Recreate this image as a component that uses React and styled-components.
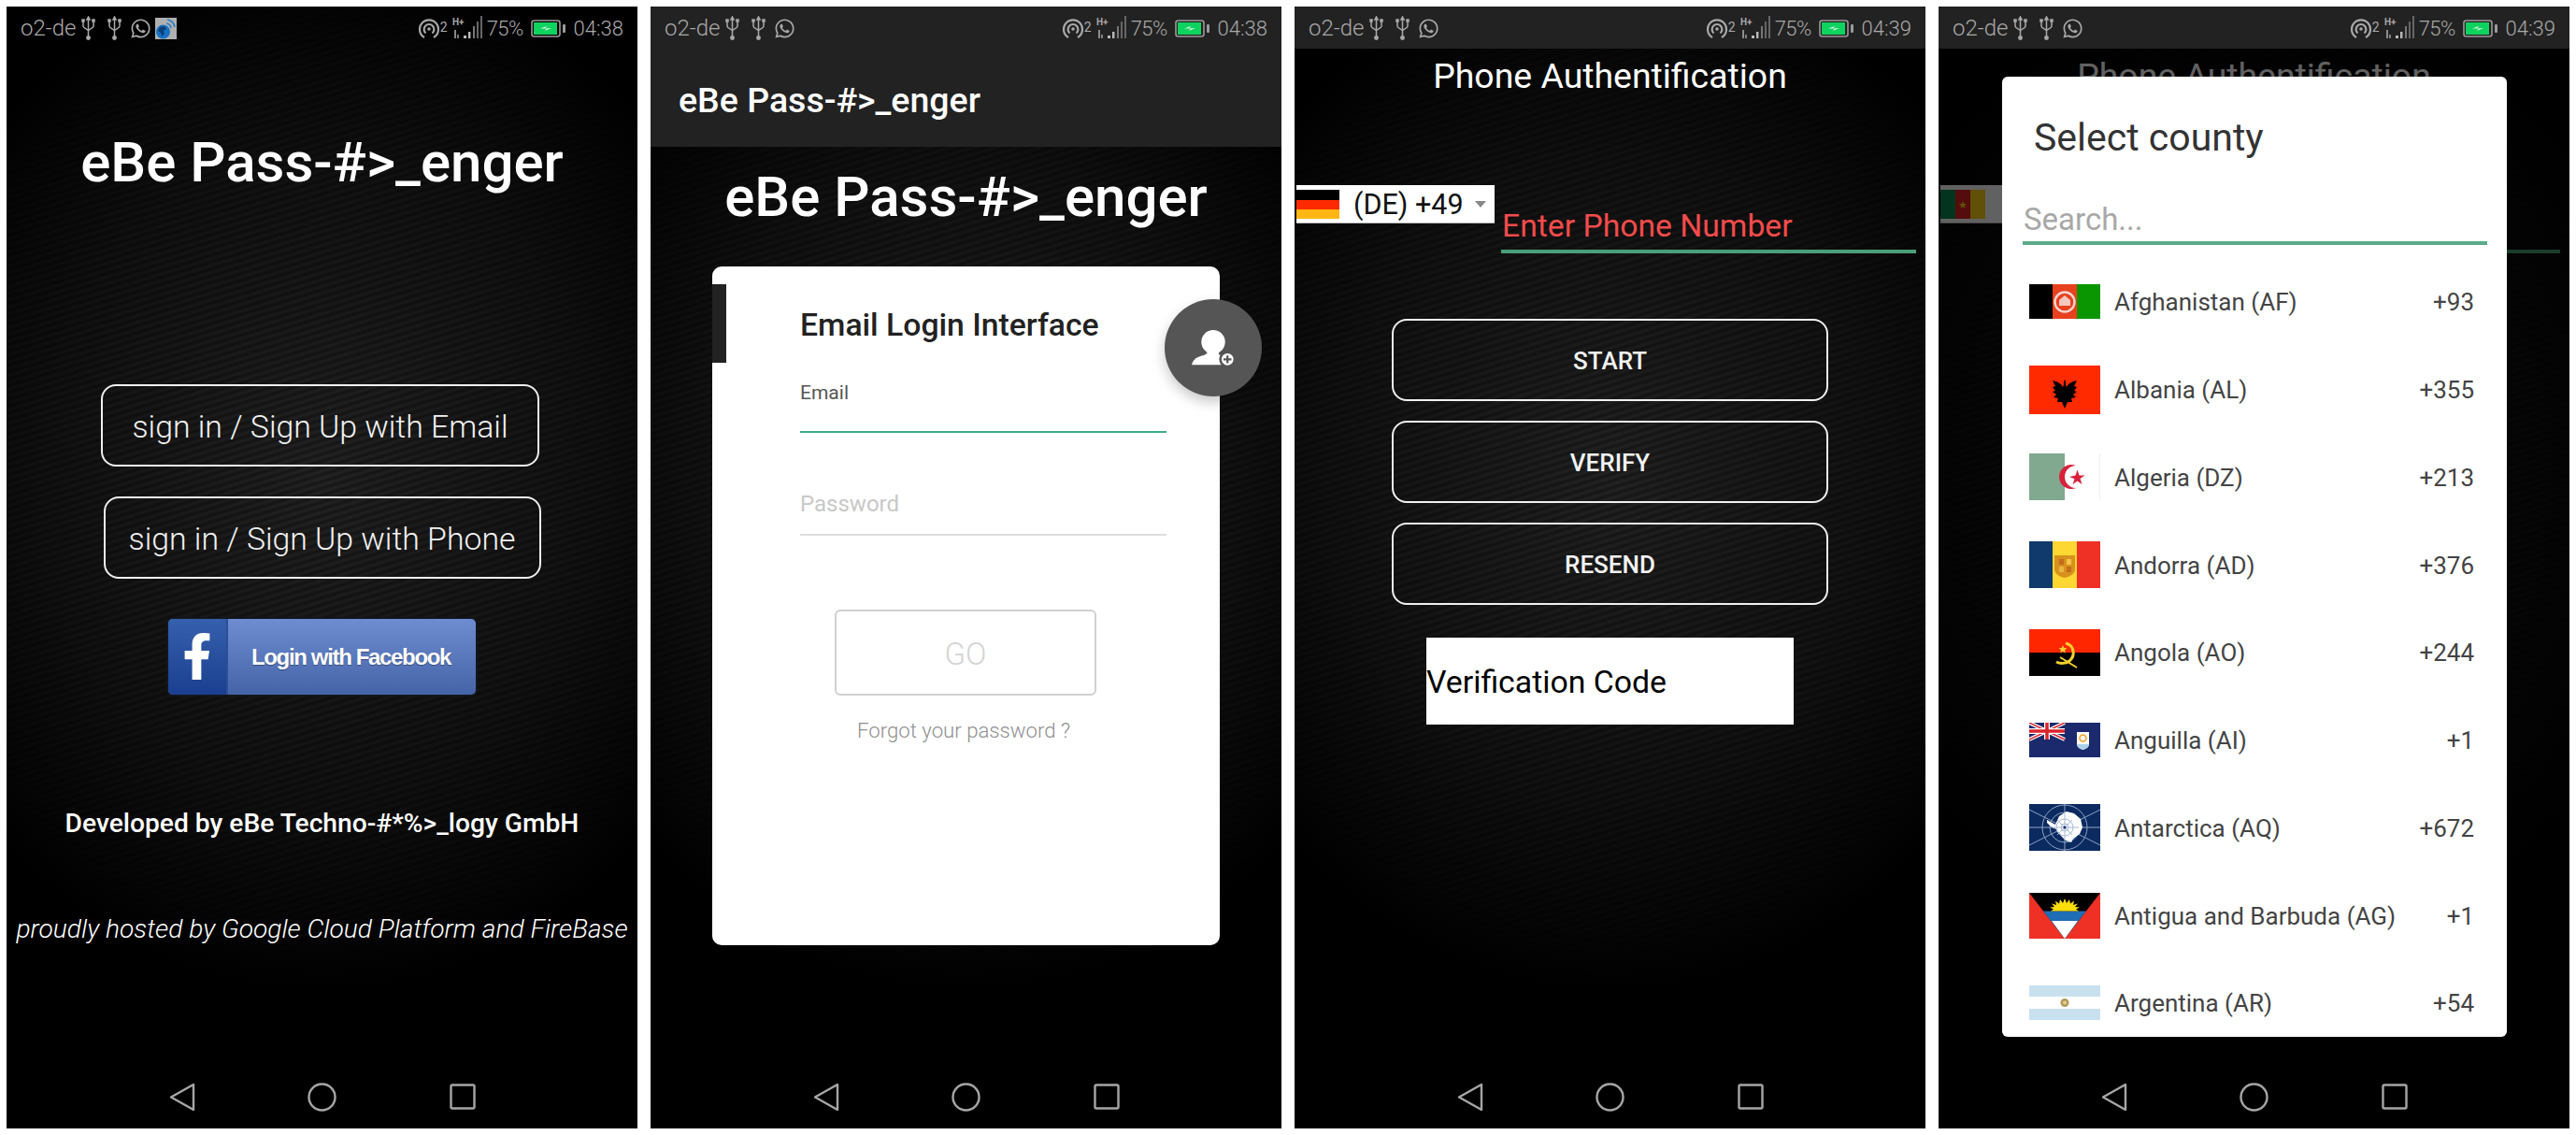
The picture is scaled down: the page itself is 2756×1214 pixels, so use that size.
import React from "react";
import styled, { createGlobalStyle } from "styled-components";
import { FaWhatsapp, FaFacebookF } from "react-icons/fa";

const Global = createGlobalStyle`
  html, body { margin: 0; padding: 0; background: #fff; }
  * { box-sizing: border-box; }
  body { font-family: Roboto, "Liberation Sans", sans-serif; }
`;

const Page = styled.div`
  width: 2756px;
  height: 1214px;
  padding: 7px;
  display: grid;
  grid-template-columns: repeat(4, 675px);
  gap: 14px;
  overflow: hidden;
`;

const Phone = styled.section`
  position: relative;
  height: 1200px;
  display: flex;
  flex-direction: column;
  overflow: hidden;
  color: #fff;
  background-color: #000;
  background-image:
    radial-gradient(ellipse 72% 46% at 50% 42%, rgba(0,0,0,0) 0%, rgba(0,0,0,.5) 60%, rgba(0,0,0,1) 100%),
    repeating-linear-gradient(163deg, #242424 0, #161616 3.5px, #242424 7px);
`;

const Main = styled.main`
  flex: 1;
  display: flex;
  flex-direction: column;
  min-height: 0;
`;

const Status = styled.div`
  height: 45px;
  flex: none;
  padding: 1px 15px 0;
  display: flex;
  align-items: center;
  justify-content: space-between;
  color: #a9a9a9;
  font-size: 23px;
  font-weight: 300;
  background: ${(p) => (p.$tinted ? "#222" : "transparent")};
`;

const StatusGroup = styled.div`
  display: flex;
  align-items: center;
`;

const Carrier = styled.span`
  width: 65px;
  font-size: 24px;
`;

const Percent = styled.span`
  margin: 0 8px 0 3px;
  font-size: 22px;
  letter-spacing: -0.6px;
`;

const Clock = styled.span`
  margin-left: 9px;
  font-size: 22px;
`;

const WhatsappIcon = styled(FaWhatsapp)`
  width: 23px;
  height: 23px;
  margin-left: -4px;
`;

const Sup = styled.sup`
  font-size: 14px;
  font-weight: 400;
  line-height: 1;
  margin: 0 4px 12px 1px;
  align-self: flex-start;
  padding-top: 9px;
`;

const Nav = styled.nav`
  height: 68px;
  flex: none;
  display: flex;
  align-items: center;
  padding-left: 174px;
  position: relative;
  z-index: 4;
`;

const NavSlot = styled.span`
  width: ${(p) => p.$w}px;
  display: flex;
`;

const Usb = () => (
  <svg width="15" height="26" viewBox="0 0 15 26" fill="none" stroke="#a9a9a9" strokeWidth="1.5" style={{ marginRight: 13 }}>
    <path d="M7.5 3v20M2 6v5c0 2.5 5.5 3 5.5 5M13 6v5c0 2.5-5.5 3-5.5 5" />
    <path d="M7.5 1l-1.6 3h3.2z" fill="#a9a9a9" />
    <circle cx="7.5" cy="23.5" r="1.7" fill="#a9a9a9" />
    <rect x="1" y="4" width="2" height="2" fill="#a9a9a9" />
    <rect x="12" y="4" width="2" height="2" fill="#a9a9a9" />
  </svg>
);

const GlobePic = () => (
  <svg width="23" height="23" viewBox="0 0 23 23" style={{ marginLeft: 4 }}>
    <rect width="23" height="23" fill="#b0b0b0" />
    <circle cx="8.5" cy="15" r="7.5" fill="#1671c4" />
    <path d="M5 10l5-1 2 3-3 2 1 3-3 3-1-4-3-2z" fill="#0b3f78" />
    <path d="M12 6a6 6 0 0 1 5 5M13 2a10 10 0 0 1 8 8" fill="none" stroke="#2a7fc9" strokeWidth="1.7" />
  </svg>
);

const Hotspot = () => (
  <svg width="22" height="24" viewBox="0 0 22 24" fill="none" stroke="#a9a9a9" strokeWidth="2.2">
    <path d="M6 22A10 10 0 1 1 16 22" />
    <path d="M7.5 17.5a5.4 5.4 0 1 1 7 0" />
    <circle cx="11" cy="13" r="1.8" fill="#a9a9a9" stroke="none" />
  </svg>
);

const Signal = () => (
  <svg width="34" height="26" viewBox="0 0 34 26" style={{ marginLeft: 1 }}>
    <text x="0" y="10" fontSize="10" fontWeight="700" fill="#a9a9a9" fontFamily="Roboto">H+</text>
    <path d="M3 15v9" stroke="#a9a9a9" strokeWidth="1.6" />
    <path d="M6 24v-4" stroke="#a9a9a9" strokeWidth="1.4" />
    <rect x="12" y="21" width="3" height="3" fill="#bbb" />
    <rect x="17" y="17" width="2.4" height="7" fill="#bbb" />
    <rect x="22" y="11" width="2" height="13" fill="#777" />
    <rect x="26" y="6" width="2" height="18" fill="#666" />
    <rect x="30" y="0" width="2" height="24" fill="#666" />
  </svg>
);

const Battery = () => (
  <svg width="37" height="19" viewBox="0 0 37 19">
    <rect x="1" y="1" width="30" height="17" rx="2.5" fill="none" stroke="#9a9a9a" strokeWidth="1.6" />
    <rect x="3" y="3" width="25" height="13" fill="#0fd35f" />
    <path d="M10 9.5l7-2.5-1.5 2.2H22l-7 2.6 1.5-2.3z" fill="#d8f7e4" />
    <rect x="34" y="5" width="3" height="9" rx="1" fill="#9a9a9a" />
  </svg>
);

const StatusBar = ({ time, globe, tinted }) => (
  <Status $tinted={tinted}>
    <StatusGroup>
      <Carrier>o2-de</Carrier>
      <Usb />
      <Usb />
      <WhatsappIcon />
      {globe && <GlobePic />}
    </StatusGroup>
    <StatusGroup>
      <Hotspot />
      <Sup>2</Sup>
      <Signal />
      <Percent>75%</Percent>
      <Battery />
      <Clock>{time}</Clock>
    </StatusGroup>
  </Status>
);

const NavBar = () => (
  <Nav>
    <NavSlot $w={148}>
      <svg width="28" height="31" viewBox="0 0 28 31" fill="none" stroke="#a6a6a6" strokeWidth="2.4" strokeLinejoin="round">
        <path d="M26 2v27L2 15.5z" />
      </svg>
    </NavSlot>
    <NavSlot $w={152}>
      <svg width="31" height="31" viewBox="0 0 31 31" fill="none" stroke="#a6a6a6" strokeWidth="2.4">
        <circle cx="15.5" cy="15.5" r="14" />
      </svg>
    </NavSlot>
    <NavSlot $w={28}>
      <svg width="28" height="28" viewBox="0 0 28 28" fill="none" stroke="#a6a6a6" strokeWidth="2.4" strokeLinejoin="round">
        <rect x="1.5" y="1.5" width="25" height="25" rx="1.5" />
      </svg>
    </NavSlot>
  </Nav>
);

/* ---------- screen 1 ---------- */
const HeroTitle = styled.h1`
  margin: ${(p) => p.$top}px 0 0;
  text-align: center;
  font-size: 60px;
  line-height: 70px;
  font-weight: 500;
  color: #fff;
`;

const Centered = styled.div`
  display: flex;
  flex-direction: column;
  align-items: center;
`;

const OutlineButton = styled.button`
  display: flex;
  align-items: center;
  justify-content: center;
  background: transparent;
  color: #f2f2f2;
  border: 2px solid #f0f0f0;
  border-radius: 16px;
  height: 88px;
  width: ${(p) => p.$w}px;
  margin: ${(p) => p.$top}px ${(p) => p.$shift || 0}px 0 0;
  padding: ${(p) => p.$padTop}px 0 0;
  font-family: Roboto, sans-serif;
  font-size: ${(p) => p.$size}px;
  font-weight: ${(p) => p.$weight};
`;

const FacebookButton = styled.button`
  width: 329px;
  height: 81px;
  margin-top: 43px;
  padding: 0;
  display: flex;
  border: 0;
  border-radius: 5px;
  overflow: hidden;
  color: #fff;
  background: linear-gradient(#6d8dd0, #4564a8);
  box-shadow: 0 0 0 2px #14161d;
`;

const FacebookMark = styled.span`
  width: 64px;
  flex: none;
  display: flex;
  align-items: flex-end;
  justify-content: center;
  padding-bottom: 16px;
  background: linear-gradient(#3560ad, #1b3f90);
  border-right: 2px solid #2c4f97;
  font-size: 50px;
`;

const FacebookLabel = styled.span`
  flex: 1;
  display: flex;
  align-items: center;
  justify-content: center;
  padding-right: 2px;
  font-family: "Liberation Sans", Arial, sans-serif;
  font-size: 24px;
  font-weight: 700;
  letter-spacing: -1.35px;
  white-space: nowrap;
  text-shadow: 0 1px 1px rgba(0,0,0,.35);
`;

const Credit = styled.p`
  margin: ${(p) => p.$top}px 0 0;
  text-align: center;
  white-space: nowrap;
  line-height: 40px;
  color: #fff;
  font-size: ${(p) => p.$size}px;
  font-weight: ${(p) => p.$weight};
  font-style: ${(p) => (p.$italic ? "italic" : "normal")};
`;

/* ---------- screen 2 ---------- */
const Toolbar = styled.header`
  height: 105px;
  flex: none;
  display: flex;
  align-items: center;
  padding: 4px 0 0 30px;
  background: #222;
  font-size: 37.5px;
  font-weight: 500;
`;

const Card = styled.div`
  position: relative;
  width: 543px;
  height: 726px;
  margin: 39px 0 0 66px;
  padding: 43px 0 0 94px;
  border-radius: 10px;
  background: #fff;
  color: #222;
`;

const CardAccent = styled.span`
  position: absolute;
  left: 0;
  top: 19px;
  width: 15px;
  height: 84px;
  background: #222;
`;

const CardTitle = styled.h2`
  margin: 0;
  font-size: 33.7px;
  line-height: 40px;
  font-weight: 500;
  color: #222;
`;

const Field = styled.div`
  width: 392px;
  margin-top: ${(p) => p.$top}px;
  padding-bottom: ${(p) => p.$pad}px;
  line-height: 30px;
  font-size: ${(p) => p.$size}px;
  color: ${(p) => (p.$active ? "#555" : "#c8c8c8")};
  border-bottom: 2px solid ${(p) => (p.$active ? "#3cae86" : "#ddd")};
`;

const GoButton = styled.button`
  display: block;
  width: 280px;
  height: 92px;
  margin: 79px 0 0 37px;
  padding: 2px 0 0;
  background: #fff;
  color: #d4d4d4;
  border: 2px solid #d0d0d0;
  border-radius: 6px;
  font-family: Roboto, sans-serif;
  font-size: 33px;
  font-weight: 300;
`;

const Forgot = styled.p`
  margin: 22px 0 0 61px;
  line-height: 30px;
  font-size: 22.2px;
  font-weight: 300;
  color: #8f8f8f;
`;

const Fab = styled.button`
  position: absolute;
  left: 484px;
  top: 35px;
  width: 104px;
  height: 104px;
  padding: 0;
  border: 0;
  border-radius: 50%;
  display: flex;
  align-items: center;
  justify-content: center;
  background: #555;
  box-shadow: 0 6px 14px rgba(0,0,0,.22);
`;

/* ---------- screen 3 / 4 ---------- */
const PhoneTitle = styled.h2`
  margin: 4px 0 0;
  text-align: center;
  line-height: 50px;
  font-size: 37.4px;
  font-weight: 400;
  color: #fff;
`;

const PhoneRow = styled.div`
  display: flex;
  align-items: flex-start;
  margin: 92px 0 0 2px;
`;

const CountryPicker = styled.div`
  width: 212px;
  height: 41px;
  flex: none;
  display: flex;
  align-items: center;
  gap: 15px;
  background: #fff;
  color: #111;
  font-size: 30.5px;
  border-bottom: 1px solid #bbb;
`;

const Caret = styled.span`
  width: 0;
  height: 0;
  margin-left: -3px;
  border-left: 6px solid transparent;
  border-right: 6px solid transparent;
  border-top: 7px solid #888;
`;

const PhoneInput = styled.div`
  width: 444px;
  min-height: 49px;
  margin: 24px 0 0 7px;
  padding: 0 0 5px 1px;
  line-height: 40px;
  font-size: 33.7px;
  color: #f44b4b;
  border-bottom: 4px solid #4a9e78;
`;

const BlockButtons = styled.div`
  display: flex;
  flex-direction: column;
  align-items: center;
  gap: 21px;
  margin-top: 70px;
`;

const CodeBox = styled.div`
  width: 393px;
  height: 93px;
  margin: 35px auto 0;
  padding-top: 2px;
  display: flex;
  align-items: center;
  background: #fff;
  color: #000;
  font-size: 33.8px;
`;

const Scrim = styled.div`
  position: absolute;
  left: 0;
  right: 0;
  top: 45px;
  bottom: 68px;
  background: rgba(0,0,0,.62);
`;

const Dialog = styled.div`
  position: absolute;
  left: 68px;
  top: 75px;
  width: 540px;
  height: 1027px;
  padding-top: 40px;
  border-radius: 6px;
  overflow: hidden;
  background: #fff;
  color: #3d3d3d;
`;

const DialogTitle = styled.h2`
  margin: 0 0 0 34px;
  line-height: 50px;
  font-size: 41px;
  font-weight: 400;
  color: #333;
`;

const Search = styled.div`
  width: 497px;
  margin: 41px 0 0 22px;
  padding: 0 0 1px 1px;
  line-height: 44px;
  font-size: 33px;
  color: #a8a8a8;
  border-bottom: 4px solid #5aab8a;
`;

const CountryList = styled.ul`
  margin: 14px 0 0;
  padding: 0;
  list-style: none;
`;

const CountryRow = styled.li`
  height: 93.75px;
  display: flex;
  align-items: center;
  gap: 15px;
  padding: 0 35px 0 29px;
  font-size: 26px;
  color: #444;
`;

const CountryName = styled.span`
  flex: 1;
  padding-top: 1px;
`;

const CountryCode = styled.span`
  padding-top: 1px;
`;

/* ---------- flags ---------- */
const FlagFrame = styled.svg`
  flex: none;
  display: block;
`;

const Flag = ({ w = 76, h, children }) => (
  <FlagFrame width={w} height={h} viewBox={`0 0 ${w} ${h}`}>{children}</FlagFrame>
);

const FlagDE = () => (
  <Flag w={46} h={31}>
    <rect width="46" height="11" fill="#000" />
    <rect y="11" width="46" height="10" fill="#ff2a00" />
    <rect y="21" width="46" height="10" fill="#ffb612" />
  </Flag>
);

const FlagCM = () => (
  <Flag w={48} h={31}>
    <rect width="16" height="31" fill="#0a8a50" />
    <rect x="16" width="16" height="31" fill="#e02020" />
    <rect x="32" width="16" height="31" fill="#fcd116" />
    <path d="M24 12l1.2 3h3l-2.4 1.9 1 3-2.8-1.8-2.8 1.8 1-3-2.4-1.9h3z" fill="#fcd116" />
  </Flag>
);

const flags = {
  AF: (
    <Flag h={37}>
      <rect width="26" height="37" fill="#000" />
      <rect x="25" width="26" height="37" fill="#e8411e" />
      <rect x="51" width="25" height="37" fill="#0a9600" />
      <circle cx="38" cy="19" r="10.5" fill="none" stroke="#f5d6d0" strokeWidth="2.4" />
      <path d="M38 12l6 5v6h-12v-6z" fill="#f3c9c0" />
    </Flag>
  ),
  AL: (
    <Flag h={52}>
      <rect width="76" height="52" fill="#ff2a00" />
      <path d="M38 46l-3-7-5 0 1-4-5-1 3-3-4-3 3-1-3-4 3-1-3-6c5 1 9 3 11 7 1-2 1-3 1-5 0 0 .5-3 1-3 .5 0 1 3 1 3 0 2 0 3 1 5 2-4 6-6 11-7l-3 6 3 1-3 4 3 1-4 3 3 3-5 1 1 4-5 0z" fill="#000" />
    </Flag>
  ),
  DZ: (
    <Flag h={50}>
      <rect width="76" height="50" fill="#fff" />
      <rect width="38" height="50" fill="#81a98f" />
      <rect x="75" width="1" height="50" fill="#f0f0f0" />
      <path d="M50 13a13 13 0 1 0 0 24 11 11 0 1 1 0-24z" fill="#d8213b" />
      <path d="M43 25l6.500-1.500 2-6 2 6 6 .1-5 3.400 2 6-5-3.600-5 3.600 2-5.800z" fill="#d8213b" />
    </Flag>
  ),
  AD: (
    <Flag h={50}>
      <rect width="25" height="50" fill="#0f3a6b" />
      <rect x="25" width="26" height="50" fill="#ffd733" />
      <rect x="51" width="25" height="50" fill="#ee3124" />
      <path d="M27 15h22v15c0 5-6 8-11 9-5-1-11-4-11-9z" fill="#d8911c" />
      <rect x="32" y="19" width="5" height="6" fill="#c56a1e" />
      <rect x="40" y="19" width="5" height="6" fill="#f3c44a" />
      <rect x="32" y="27" width="5" height="6" fill="#e7b73c" />
      <rect x="40" y="27" width="5" height="6" fill="#c56a1e" />
    </Flag>
  ),
  AO: (
    <Flag h={50}>
      <rect width="76" height="25" fill="#ff2600" />
      <rect y="25" width="76" height="25" fill="#000" />
      <path d="M39 15c9 2 11 13 4 19-4 3-10 3-14 1" fill="none" stroke="#f6cf2e" strokeWidth="3" />
      <path d="M33 30l18 11" stroke="#f6cf2e" strokeWidth="2" />
      <path d="M36 17l1.300 3 3.300.2-2.500 2 .8 3.200-2.900-1.800-2.800 1.800.8-3.200-2.500-2 3.200-.2z" fill="#f6cf2e" />
    </Flag>
  ),
  AI: (
    <Flag h={37}>
      <rect width="76" height="37" fill="#1a2a6c" />
      <rect width="38" height="18" fill="#1a2a6c" />
      <path d="M0 0l38 18M38 0L0 18" stroke="#fff" strokeWidth="4" />
      <path d="M0 0l38 18M38 0L0 18" stroke="#d8242c" strokeWidth="1.500" />
      <path d="M19 0v18M0 9h38" stroke="#fff" strokeWidth="6" />
      <path d="M19 0v18M0 9h38" stroke="#d8242c" strokeWidth="3.500" />
      <path d="M51 10h13v13c0 3-3 5-6.500 6-3.500-1-6.500-3-6.500-6z" fill="#fff" />
      <path d="M51 23h13c0 3-3 5-6.500 6-3.500-1-6.500-3-6.500-6z" fill="#a9d2ea" />
      <circle cx="57.500" cy="16.500" r="3.500" fill="none" stroke="#f0a11e" strokeWidth="1.500" />
    </Flag>
  ),
  AQ: (
    <Flag h={50}>
      <rect width="76" height="50" fill="#0b2a5f" />
      <g fill="none" stroke="#8fa4c6" strokeWidth="1">
        <circle cx="38" cy="25" r="24" />
        <circle cx="38" cy="25" r="16" />
        <circle cx="38" cy="25" r="9" />
        <path d="M0 25h76M38 0v50M0 6l76 38M0 44L76 6" />
      </g>
      <path d="M19 17l9 5 4-9 8-5 8 2 7 6 2 9-3 7-7 5-2 4-6-2-5-5-5-7-6-3-4-4z" fill="#fff" />
      <g fill="none" stroke="#a9b9d4" strokeWidth="1">
        <circle cx="38" cy="25" r="9" />
        <circle cx="38" cy="25" r="4" />
        <path d="M25 25h28M38 10v28M30 17l16 16M46 17L30 33" />
      </g>
      <circle cx="38" cy="25" r="1.500" fill="#0b2a5f" />
    </Flag>
  ),
  AG: (
    <Flag h={49}>
      <rect width="76" height="49" fill="#ee3124" />
      <path d="M0 0h76L38 49z" fill="#000" />
      <path d="M15 19.500h46L38 49z" fill="#1f6eb5" />
      <path d="M24 30h28L38 49z" fill="#fff" />
      <path d="M23 19.500l3-2-4-2 5-.6-3-3.400 5 1.400-1-4.400 4 3 1-4.500 3 4 2-5 2 5 3-4 1 4.500 4-3-1 4.400 5-1.400-3 3.400 5 .6-4 2 3 2z" fill="#fbdd0a" />
    </Flag>
  ),
  AR: (
    <Flag h={37}>
      <rect width="76" height="37" fill="#c9e0ef" />
      <rect y="12" width="76" height="13" fill="#fff" />
      <circle cx="38" cy="18.500" r="4.500" fill="#b39a5a" />
      <circle cx="38" cy="18.500" r="2" fill="#e5cf8d" />
    </Flag>
  ),
};

const countries = [
  ["AF", "Afghanistan", "+93"],
  ["AL", "Albania", "+355"],
  ["DZ", "Algeria", "+213"],
  ["AD", "Andorra", "+376"],
  ["AO", "Angola", "+244"],
  ["AI", "Anguilla", "+1"],
  ["AQ", "Antarctica", "+672"],
  ["AG", "Antigua and Barbuda", "+1"],
  ["AR", "Argentina", "+54"],
];

const PhoneHeader = ({ flag, label, placeholder }) => (
  <>
    <PhoneTitle>Phone Authentification</PhoneTitle>
    <PhoneRow>
      <CountryPicker>
        {flag}
        {label && <span>{label}</span>}
        {label && <Caret />}
      </CountryPicker>
      <PhoneInput>{placeholder}</PhoneInput>
    </PhoneRow>
  </>
);

export default function App() {
  return (
    <>
      <Global />
      <Page>
        <Phone>
          <StatusBar time="04:38" globe />
          <Main>
            <HeroTitle $top={87}>eBe Pass-#&gt;_enger</HeroTitle>
            <Centered>
              <OutlineButton $top={202} $w={469} $shift={4} $size={33.8} $weight={300} $padTop={3}>sign in / Sign Up with Email</OutlineButton>
              <OutlineButton $top={32} $w={468} $size={33.8} $weight={300} $padTop={3}>sign in / Sign Up with Phone</OutlineButton>
              <FacebookButton>
                <FacebookMark><FaFacebookF /></FacebookMark>
                <FacebookLabel>Login with Facebook</FacebookLabel>
              </FacebookButton>
            </Centered>
            <Credit $top={118} $size={28.2} $weight={500}>Developed by eBe Techno-#*%&gt;_logy GmbH</Credit>
            <Credit $top={73} $size={28.2} $weight={300} $italic>proudly hosted by Google Cloud Platform and FireBase</Credit>
          </Main>
          <NavBar />
        </Phone>

        <Phone>
          <StatusBar time="04:38" tinted />
          <Toolbar>eBe Pass-#&gt;_enger</Toolbar>
          <Main>
            <HeroTitle $top={19}>eBe Pass-#&gt;_enger</HeroTitle>
            <Card>
              <CardAccent />
              <CardTitle>Email Login Interface</CardTitle>
              <Field $top={37} $pad={26} $size={21} $active>Email</Field>
              <Field $top={61} $pad={17} $size={24}>Password</Field>
              <GoButton>GO</GoButton>
              <Forgot>Forgot your password ?</Forgot>
              <Fab>
                <svg width="46" height="39" viewBox="0 0 54 46">
                  <circle cx="27" cy="15" r="15" fill="#fff" />
                  <path d="M20 26h14v5c5 1 8 3 10 5v8H0c1-5 4-9 11-11 4-1 9-2 9-7z" fill="#fff" />
                  <circle cx="45" cy="37" r="9" fill="#fff" stroke="#555" strokeWidth="3" />
                  <path d="M40 37h10M45 32v10" stroke="#555" strokeWidth="2.600" />
                </svg>
              </Fab>
            </Card>
          </Main>
          <NavBar />
        </Phone>

        <Phone>
          <StatusBar time="04:39" tinted />
          <Main>
            <PhoneHeader flag={<FlagDE />} label="(DE) +49" placeholder="Enter Phone Number" />
            <BlockButtons>
              <OutlineButton $w={467} $top={0} $size={26} $weight={500} $padTop={1}>START</OutlineButton>
              <OutlineButton $w={467} $top={0} $size={26} $weight={500} $padTop={1}>VERIFY</OutlineButton>
              <OutlineButton $w={467} $top={0} $size={26} $weight={500} $padTop={1}>RESEND</OutlineButton>
            </BlockButtons>
            <CodeBox>Verification Code</CodeBox>
          </Main>
          <NavBar />
        </Phone>

        <Phone>
          <StatusBar time="04:39" tinted />
          <Main>
            <PhoneHeader flag={<FlagCM />} />
          </Main>
          <NavBar />
          <Scrim />
          <Dialog>
            <DialogTitle>Select county</DialogTitle>
            <Search>Search...</Search>
            <CountryList>
              {countries.map(([iso, name, code]) => (
                <CountryRow key={iso}>
                  {flags[iso]}
                  <CountryName>{name} ({iso})</CountryName>
                  <CountryCode>{code}</CountryCode>
                </CountryRow>
              ))}
            </CountryList>
          </Dialog>
        </Phone>
      </Page>
    </>
  );
}
